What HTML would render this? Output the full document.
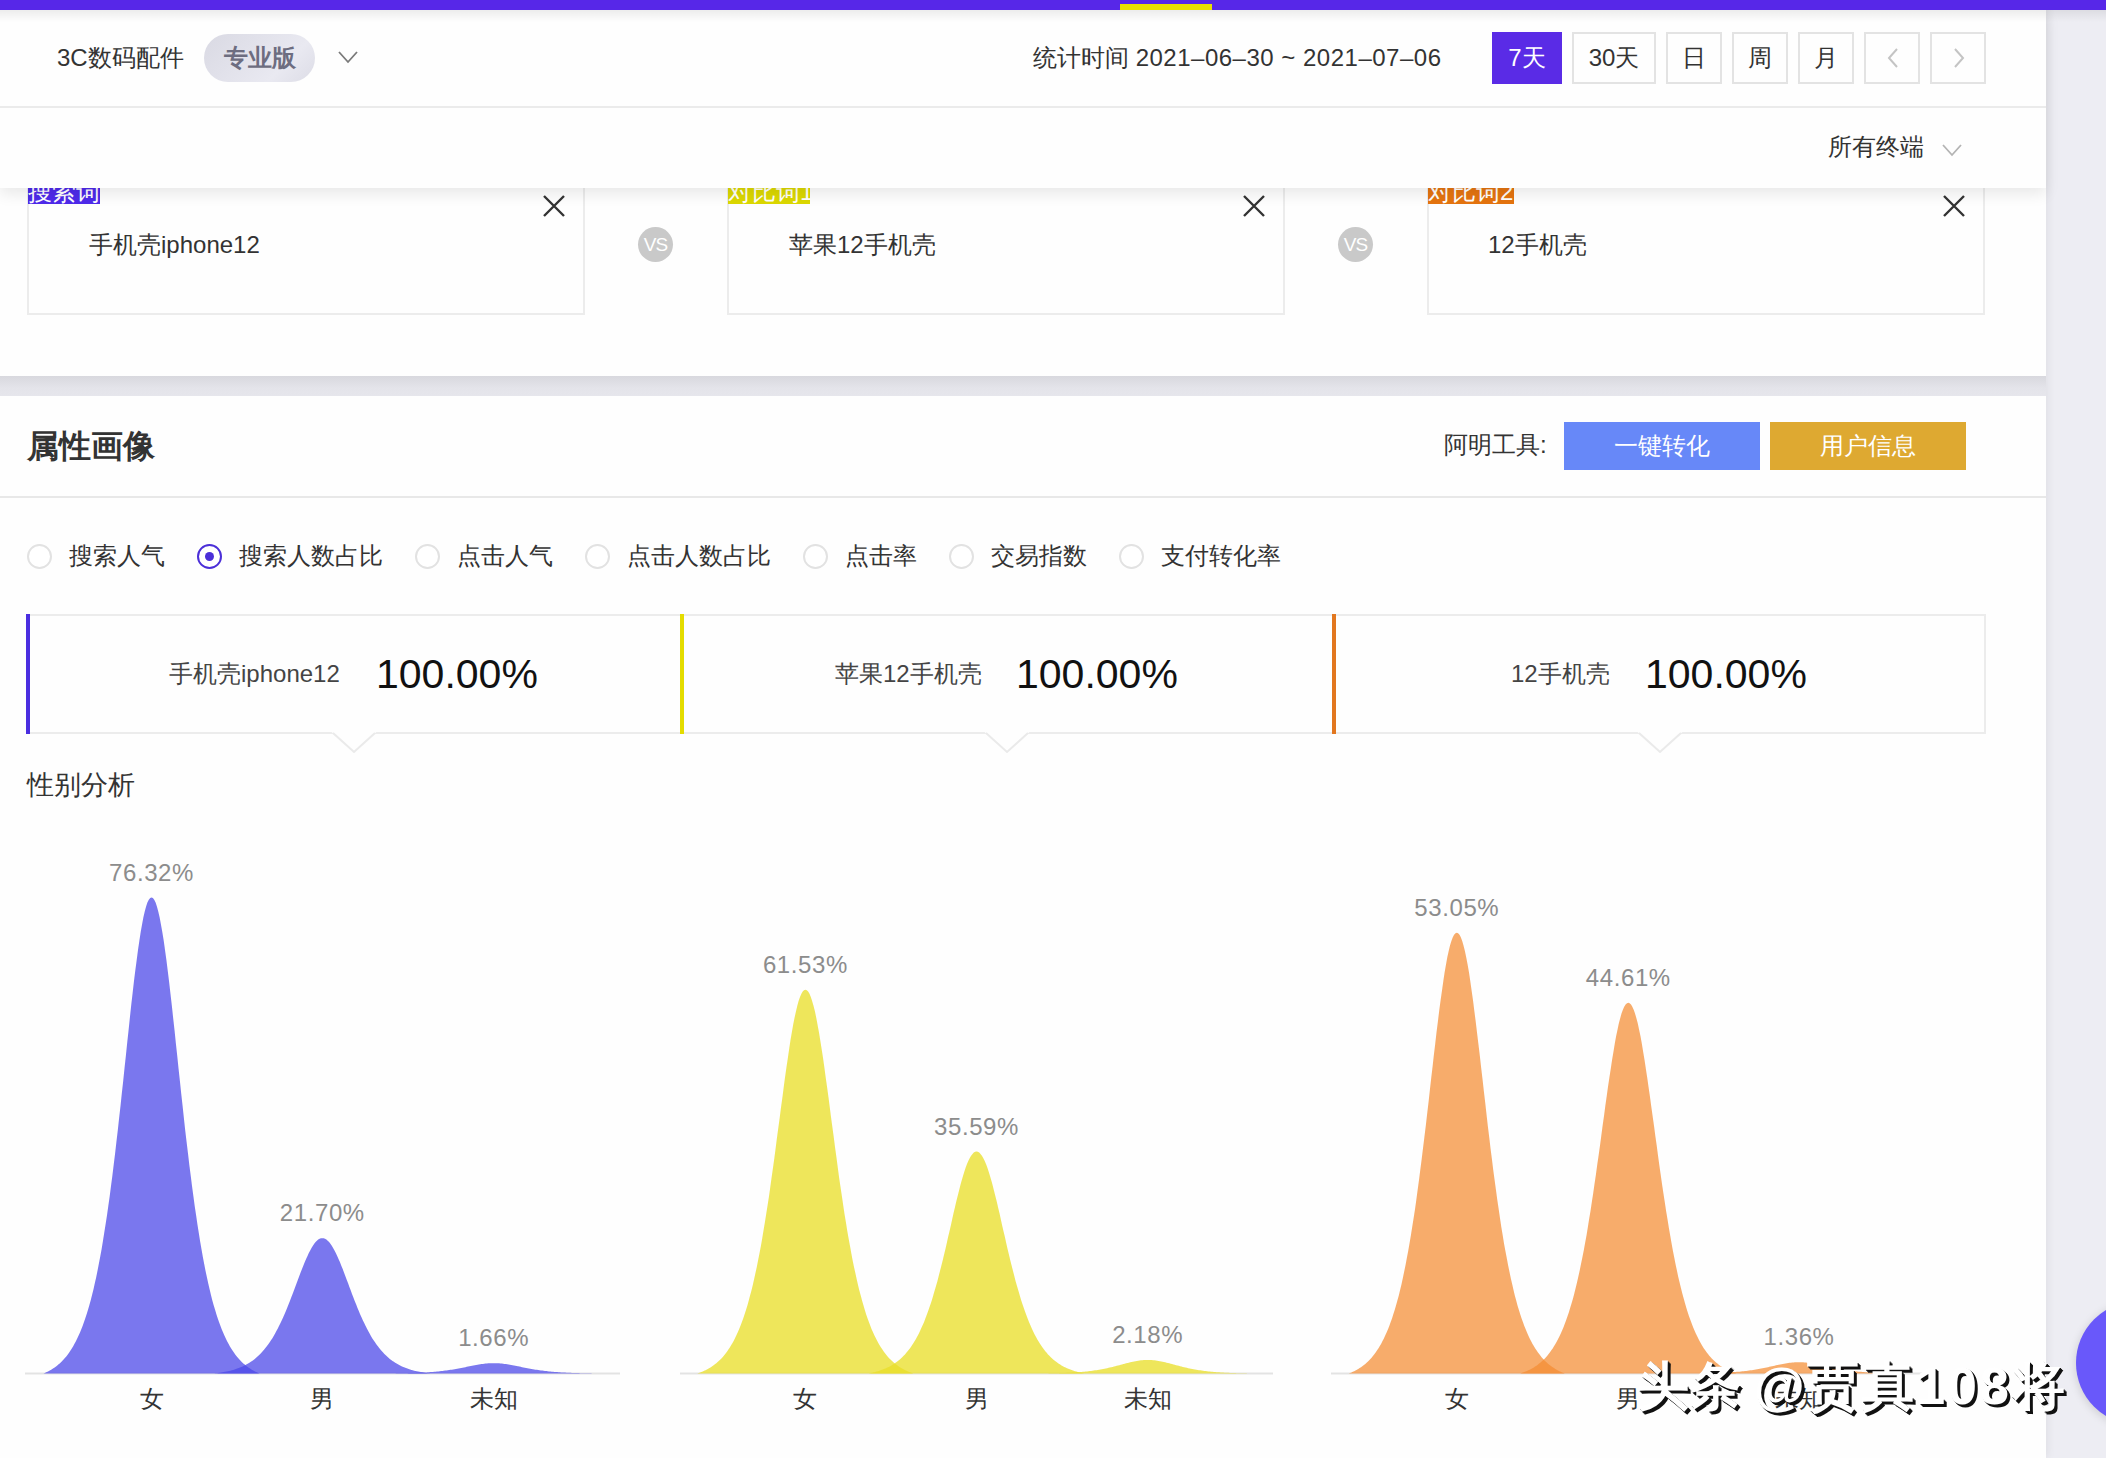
<!DOCTYPE html>
<html><head><meta charset="utf-8">
<style>
*{margin:0;padding:0;box-sizing:border-box}
html,body{width:2106px;height:1458px;overflow:hidden}
body{background:#ededf3;font-family:"Liberation Sans",sans-serif;color:#333;position:relative}
.abs{position:absolute}
#col{position:absolute;left:0;top:0;width:2046px;height:1458px;background:#fefefe;box-shadow:2px 0 8px rgba(0,0,0,0.06)}
#topbar{position:absolute;left:0;top:0;width:2106px;height:10px;background:#5727e8;z-index:20}
#topind{position:absolute;left:1120px;top:4px;width:92px;height:6px;background:#e8e000;z-index:21}
#hdr{position:absolute;left:0;top:10px;width:2046px;height:178px;background:#fefefe;z-index:10;box-shadow:0 6px 14px rgba(0,0,0,0.085)}
#hdr .line{position:absolute;left:0;top:96px;width:2046px;height:2px;background:#ebebeb}
.t24{position:absolute;font-size:24px;line-height:30px;white-space:nowrap}
.pill{position:absolute;left:204px;top:24px;width:111px;height:48px;border-radius:24px;background:linear-gradient(135deg,#d9d9e3,#e9e9f1 70%,#dcdce6);color:#6d6d80;font-size:24px;line-height:48px;text-align:center;font-weight:bold}
.btn{position:absolute;top:22px;height:52px;border:2px solid #e3e3e3;background:#fefefe;font-size:24px;line-height:48px;text-align:center;color:#333}
.btn.on{background:#5a2be6;border-color:#5a2be6;color:#fff}
.card{position:absolute;top:160px;width:558px;height:155px;border:2px solid #ececec;background:#fefefe}
.tag{position:absolute;top:176px;height:28px;font-size:24px;line-height:32px;color:#fff;padding:0;white-space:nowrap;overflow:hidden}
.vs{position:absolute;width:35px;height:35px;border-radius:50%;background:#c9c9c9;color:#fff;font-size:19px;line-height:35px;text-align:center;letter-spacing:-1px}
.xic{position:absolute;width:22px;height:22px}
#gap{position:absolute;left:0;top:376px;width:2046px;height:20px;background:linear-gradient(#d8d8de,#e4e4ea 60%,#e6e6ec)}
.radio{position:absolute;top:544px;width:25px;height:25px;border-radius:50%;border:2px solid #e2e2e2;background:#fff}
.radio.on{border-color:#4b2fd8}
.radio.on:after{content:"";position:absolute;left:6px;top:6px;width:9px;height:9px;border-radius:50%;background:#4b2fd8}
.rl{position:absolute;top:541px;font-size:24px;line-height:30px;color:#333;white-space:nowrap}
.pl{position:absolute;width:120px;text-align:center;font-size:24px;line-height:28px;color:#8c8c8c;letter-spacing:0.6px}
.xl{position:absolute;width:120px;text-align:center;font-size:24px;line-height:30px;color:#333}
.sv{position:absolute;font-size:41px;line-height:46px;color:#111;white-space:nowrap}
.sl{position:absolute;font-size:24px;line-height:30px;color:#444;white-space:nowrap}
</style></head><body>
<div id="col"></div>
<div id="topbar"></div><div class="abs" style="left:0;top:10px;width:2106px;height:12px;z-index:19;background:linear-gradient(rgba(0,0,0,0.07),rgba(0,0,0,0))"></div><div id="topind"></div>

<!-- search cards (under header overlay) -->
<div class="card" style="left:27px"></div>
<div class="card" style="left:727px"></div>
<div class="card" style="left:1427px"></div>
<div class="tag" style="left:28px;width:72px;background:#4e2aea">搜索词</div>
<div class="tag" style="left:728px;width:82px;background:#dcd800">对比词1</div>
<div class="tag" style="left:1428px;width:86px;background:#e5740f">对比词2</div>
<svg class="xic" style="left:543px;top:195px" viewBox="0 0 22 22"><path d="M1,1 L21,21 M21,1 L1,21" stroke="#333" stroke-width="2.4"/></svg>
<svg class="xic" style="left:1243px;top:195px" viewBox="0 0 22 22"><path d="M1,1 L21,21 M21,1 L1,21" stroke="#333" stroke-width="2.4"/></svg>
<svg class="xic" style="left:1943px;top:195px" viewBox="0 0 22 22"><path d="M1,1 L21,21 M21,1 L1,21" stroke="#333" stroke-width="2.4"/></svg>
<div class="t24" style="left:89px;top:230px">手机壳iphone12</div>
<div class="t24" style="left:789px;top:230px">苹果12手机壳</div>
<div class="t24" style="left:1488px;top:230px">12手机壳</div>
<div class="vs" style="left:638px;top:227px">VS</div>
<div class="vs" style="left:1338px;top:227px">VS</div>
<div id="gap"></div>

<!-- header overlay -->
<div id="hdr">
  <div class="t24" style="left:57px;top:33px">3C数码配件</div>
  <div class="pill">专业版</div>
  <svg class="abs" style="left:338px;top:41px" width="20" height="13" viewBox="0 0 20 13"><path d="M1,1 L10,11 L19,1" fill="none" stroke="#7a7a7a" stroke-width="1.8"/></svg>
  <div class="t24" style="left:1033px;top:33px">统计时间 <span style="letter-spacing:0.5px">2021–06–30 ~ 2021–07–06</span></div>
  <div class="btn on" style="left:1492px;width:70px">7天</div>
  <div class="btn" style="left:1572px;width:84px">30天</div>
  <div class="btn" style="left:1666px;width:56px">日</div>
  <div class="btn" style="left:1732px;width:56px">周</div>
  <div class="btn" style="left:1798px;width:56px">月</div>
  <div class="btn" style="left:1864px;width:56px"><svg style="position:absolute;left:21px;top:14px" width="12" height="20" viewBox="0 0 12 20"><path d="M10,1 L2,10 L10,19" fill="none" stroke="#c4c4c4" stroke-width="2"/></svg></div>
  <div class="btn" style="left:1930px;width:56px"><svg style="position:absolute;left:21px;top:14px" width="12" height="20" viewBox="0 0 12 20"><path d="M2,1 L10,10 L2,19" fill="none" stroke="#c4c4c4" stroke-width="2"/></svg></div>
  <div class="line"></div>
  <div class="t24" style="left:1828px;top:122px">所有终端</div>
  <svg class="abs" style="left:1942px;top:134px" width="20" height="13" viewBox="0 0 20 13"><path d="M1,1 L10,11 L19,1" fill="none" stroke="#b4b4b4" stroke-width="1.8"/></svg>
</div>

<!-- panel 2 -->
<div class="abs" style="left:27px;top:427px;font-size:32px;line-height:38px;font-weight:bold;color:#333;white-space:nowrap">属性画像</div>
<div class="t24" style="left:1444px;top:430px">阿明工具:</div>
<div class="abs" style="left:1564px;top:422px;width:196px;height:48px;background:#6788f8;color:#fff;font-size:24px;line-height:48px;text-align:center">一键转化</div>
<div class="abs" style="left:1770px;top:422px;width:196px;height:48px;background:#dea931;color:#fff;font-size:24px;line-height:48px;text-align:center">用户信息</div>
<div class="abs" style="left:0;top:496px;width:2046px;height:2px;background:#e8e8e8"></div>

<div class="radio" style="left:27px"></div><div class="rl" style="left:69px">搜索人气</div>
<div class="radio on" style="left:197px"></div><div class="rl" style="left:239px">搜索人数占比</div>
<div class="radio" style="left:415px"></div><div class="rl" style="left:457px">点击人气</div>
<div class="radio" style="left:585px"></div><div class="rl" style="left:627px">点击人数占比</div>
<div class="radio" style="left:803px"></div><div class="rl" style="left:845px">点击率</div>
<div class="radio" style="left:949px"></div><div class="rl" style="left:991px">交易指数</div>
<div class="radio" style="left:1119px"></div><div class="rl" style="left:1161px">支付转化率</div>

<!-- stat boxes -->
<div class="abs" style="left:26px;top:614px;width:1960px;height:120px;border:2px solid #ececec;background:#fefefe"></div>
<div class="abs" style="left:26px;top:614px;width:4px;height:120px;background:#4a2ee0"></div>
<div class="abs" style="left:680px;top:614px;width:4px;height:120px;background:#e4dc00"></div>
<div class="abs" style="left:1332px;top:614px;width:4px;height:120px;background:#e2771f"></div>
<div class="sl" style="left:169px;top:659px">手机壳iphone12</div>
<div class="sv" style="left:376px;top:651px">100.00%</div>
<div class="sl" style="left:835px;top:659px">苹果12手机壳</div>
<div class="sv" style="left:1016px;top:651px">100.00%</div>
<div class="sl" style="left:1511px;top:659px">12手机壳</div>
<div class="sv" style="left:1645px;top:651px">100.00%</div>
<svg class="abs" style="left:0;top:720px" width="2046" height="40"><path d="M331,11.5 L354,33 L377,11.5 Z" fill="#fefefe"/><path d="M333,13 L354,32 L375,13" fill="none" stroke="#eaeaea" stroke-width="2"/><path d="M984,11.5 L1007,33 L1030,11.5 Z" fill="#fefefe"/><path d="M986,13 L1007,32 L1028,13" fill="none" stroke="#eaeaea" stroke-width="2"/><path d="M1637,11.5 L1660,33 L1683,11.5 Z" fill="#fefefe"/><path d="M1639,13 L1660,32 L1681,13" fill="none" stroke="#eaeaea" stroke-width="2"/></svg>

<div class="abs" style="left:27px;top:768px;font-size:27px;line-height:34px;color:#333;white-space:nowrap">性别分析</div>

<svg class="abs" style="left:0;top:0" width="2106" height="1458">
<line x1="25" y1="1373.5" x2="620" y2="1373.5" stroke="#e3e3e3" stroke-width="2"/>
<path d="M43.5,1373.5 L43.5,1373.50 L44.8,1372.93 L46.2,1372.32 L47.5,1371.68 L48.9,1370.98 L50.2,1370.24 L51.6,1369.45 L53.0,1368.60 L54.3,1367.69 L55.7,1366.72 L57.0,1365.69 L58.3,1364.58 L59.7,1363.40 L61.0,1362.14 L62.4,1360.79 L63.8,1359.35 L65.1,1357.82 L66.5,1356.18 L67.8,1354.43 L69.2,1352.57 L70.5,1350.58 L71.8,1348.47 L73.2,1346.21 L74.5,1343.81 L75.9,1341.25 L77.2,1338.52 L78.6,1335.62 L80.0,1332.54 L81.3,1329.26 L82.7,1325.78 L84.0,1322.08 L85.3,1318.15 L86.7,1313.99 L88.1,1309.57 L89.4,1304.90 L90.8,1299.95 L92.1,1294.72 L93.5,1289.19 L94.8,1283.35 L96.2,1277.19 L97.5,1270.71 L98.8,1263.88 L100.2,1256.70 L101.6,1249.17 L102.9,1241.27 L104.2,1233.00 L105.6,1224.36 L107.0,1215.34 L108.3,1205.94 L109.7,1196.17 L111.0,1186.03 L112.4,1175.53 L113.7,1164.68 L115.1,1153.51 L116.4,1142.02 L117.8,1130.24 L119.1,1118.20 L120.5,1105.94 L121.8,1093.48 L123.2,1080.89 L124.5,1068.20 L125.9,1055.47 L127.2,1042.75 L128.6,1030.11 L129.9,1017.62 L131.2,1005.35 L132.6,993.37 L133.9,981.76 L135.3,970.59 L136.7,959.95 L138.0,949.91 L139.4,940.55 L140.7,931.95 L142.1,924.18 L143.4,917.29 L144.8,911.36 L146.1,906.43 L147.4,902.55 L148.8,899.75 L150.2,898.06 L151.5,897.49 L152.9,898.06 L154.2,899.75 L155.6,902.55 L156.9,906.43 L158.2,911.36 L159.6,917.29 L160.9,924.18 L162.3,931.95 L163.7,940.55 L165.0,949.91 L166.4,959.95 L167.7,970.59 L169.1,981.76 L170.4,993.37 L171.8,1005.35 L173.1,1017.62 L174.5,1030.11 L175.8,1042.75 L177.2,1055.47 L178.5,1068.20 L179.9,1080.89 L181.2,1093.48 L182.6,1105.94 L183.9,1118.20 L185.2,1130.24 L186.6,1142.02 L188.0,1153.51 L189.3,1164.68 L190.7,1175.53 L192.0,1186.03 L193.4,1196.17 L194.7,1205.94 L196.1,1215.34 L197.4,1224.36 L198.8,1233.00 L200.1,1241.27 L201.5,1249.17 L202.8,1256.70 L204.2,1263.88 L205.5,1270.71 L206.9,1277.19 L208.2,1283.35 L209.6,1289.19 L210.9,1294.72 L212.2,1299.95 L213.6,1304.90 L215.0,1309.57 L216.3,1313.99 L217.7,1318.15 L219.0,1322.08 L220.4,1325.78 L221.7,1329.26 L223.1,1332.54 L224.4,1335.62 L225.8,1338.52 L227.1,1341.25 L228.5,1343.81 L229.8,1346.21 L231.2,1348.47 L232.5,1350.58 L233.9,1352.57 L235.2,1354.43 L236.6,1356.18 L237.9,1357.82 L239.2,1359.35 L240.6,1360.79 L242.0,1362.14 L243.3,1363.40 L244.7,1364.58 L246.0,1365.69 L247.4,1366.72 L248.7,1367.69 L250.1,1368.60 L251.4,1369.45 L252.8,1370.24 L254.1,1370.98 L255.5,1371.68 L256.8,1372.32 L258.1,1372.93 L259.5,1373.50 L259.5,1373.5 Z" fill="rgba(76,72,232,0.74)"/>
<path d="M214.3,1373.5 L214.3,1373.50 L215.7,1373.34 L217.0,1373.17 L218.4,1372.98 L219.7,1372.78 L221.1,1372.57 L222.4,1372.35 L223.8,1372.11 L225.1,1371.85 L226.5,1371.57 L227.8,1371.28 L229.2,1370.96 L230.5,1370.63 L231.9,1370.27 L233.2,1369.89 L234.6,1369.48 L235.9,1369.04 L237.2,1368.58 L238.6,1368.08 L240.0,1367.55 L241.3,1366.98 L242.7,1366.38 L244.0,1365.74 L245.4,1365.06 L246.7,1364.33 L248.1,1363.55 L249.4,1362.73 L250.8,1361.85 L252.1,1360.92 L253.5,1359.93 L254.8,1358.88 L256.1,1357.76 L257.5,1356.58 L258.9,1355.32 L260.2,1353.99 L261.6,1352.59 L262.9,1351.10 L264.2,1349.53 L265.6,1347.87 L267.0,1346.12 L268.3,1344.27 L269.7,1342.33 L271.0,1340.29 L272.4,1338.15 L273.7,1335.90 L275.1,1333.55 L276.4,1331.09 L277.8,1328.53 L279.1,1325.86 L280.5,1323.08 L281.8,1320.20 L283.2,1317.21 L284.5,1314.13 L285.9,1310.95 L287.2,1307.68 L288.6,1304.33 L289.9,1300.91 L291.2,1297.42 L292.6,1293.88 L294.0,1290.30 L295.3,1286.69 L296.7,1283.07 L298.0,1279.46 L299.4,1275.87 L300.7,1272.31 L302.1,1268.82 L303.4,1265.42 L304.8,1262.12 L306.1,1258.94 L307.5,1255.92 L308.8,1253.06 L310.2,1250.40 L311.5,1247.96 L312.9,1245.74 L314.2,1243.79 L315.6,1242.10 L316.9,1240.70 L318.2,1239.59 L319.6,1238.80 L321.0,1238.32 L322.3,1238.16 L323.7,1238.32 L325.0,1238.80 L326.4,1239.59 L327.7,1240.70 L329.1,1242.10 L330.4,1243.79 L331.8,1245.74 L333.1,1247.96 L334.5,1250.40 L335.8,1253.06 L337.2,1255.92 L338.5,1258.94 L339.9,1262.12 L341.2,1265.42 L342.6,1268.82 L343.9,1272.31 L345.2,1275.87 L346.6,1279.46 L348.0,1283.07 L349.3,1286.69 L350.7,1290.30 L352.0,1293.88 L353.4,1297.42 L354.7,1300.91 L356.1,1304.33 L357.4,1307.68 L358.8,1310.95 L360.1,1314.13 L361.5,1317.21 L362.8,1320.20 L364.2,1323.08 L365.5,1325.86 L366.9,1328.53 L368.2,1331.09 L369.6,1333.55 L370.9,1335.90 L372.2,1338.15 L373.6,1340.29 L375.0,1342.33 L376.3,1344.27 L377.7,1346.12 L379.0,1347.87 L380.4,1349.53 L381.7,1351.10 L383.1,1352.59 L384.4,1353.99 L385.8,1355.32 L387.1,1356.58 L388.5,1357.76 L389.8,1358.88 L391.2,1359.93 L392.5,1360.92 L393.9,1361.85 L395.2,1362.73 L396.6,1363.55 L397.9,1364.33 L399.2,1365.06 L400.6,1365.74 L402.0,1366.38 L403.3,1366.98 L404.7,1367.55 L406.0,1368.08 L407.4,1368.58 L408.7,1369.04 L410.1,1369.48 L411.4,1369.89 L412.8,1370.27 L414.1,1370.63 L415.5,1370.96 L416.8,1371.28 L418.2,1371.57 L419.5,1371.85 L420.9,1372.11 L422.2,1372.35 L423.6,1372.57 L424.9,1372.78 L426.2,1372.98 L427.6,1373.17 L429.0,1373.34 L430.3,1373.50 L430.3,1373.5 Z" fill="rgba(76,72,232,0.74)"/>
<path d="M385.7,1373.5 L385.7,1373.50 L387.0,1373.49 L388.4,1373.47 L389.8,1373.46 L391.1,1373.45 L392.4,1373.43 L393.8,1373.41 L395.1,1373.39 L396.5,1373.37 L397.9,1373.35 L399.2,1373.33 L400.5,1373.31 L401.9,1373.28 L403.2,1373.25 L404.6,1373.22 L405.9,1373.19 L407.3,1373.16 L408.6,1373.12 L410.0,1373.09 L411.4,1373.04 L412.7,1373.00 L414.0,1372.96 L415.4,1372.91 L416.8,1372.85 L418.1,1372.80 L419.4,1372.74 L420.8,1372.68 L422.1,1372.61 L423.5,1372.54 L424.9,1372.46 L426.2,1372.38 L427.5,1372.30 L428.9,1372.21 L430.2,1372.11 L431.6,1372.01 L432.9,1371.90 L434.3,1371.79 L435.6,1371.67 L437.0,1371.54 L438.4,1371.41 L439.7,1371.26 L441.1,1371.12 L442.4,1370.96 L443.8,1370.80 L445.1,1370.62 L446.4,1370.44 L447.8,1370.26 L449.1,1370.06 L450.5,1369.86 L451.9,1369.64 L453.2,1369.42 L454.6,1369.19 L455.9,1368.96 L457.2,1368.72 L458.6,1368.47 L459.9,1368.21 L461.3,1367.95 L462.6,1367.68 L464.0,1367.41 L465.4,1367.14 L466.7,1366.86 L468.1,1366.58 L469.4,1366.31 L470.8,1366.03 L472.1,1365.76 L473.4,1365.49 L474.8,1365.23 L476.1,1364.98 L477.5,1364.74 L478.9,1364.51 L480.2,1364.29 L481.6,1364.08 L482.9,1363.90 L484.2,1363.73 L485.6,1363.58 L486.9,1363.45 L488.3,1363.34 L489.6,1363.26 L491.0,1363.20 L492.4,1363.16 L493.7,1363.15 L495.1,1363.16 L496.4,1363.20 L497.8,1363.26 L499.1,1363.34 L500.4,1363.45 L501.8,1363.58 L503.1,1363.73 L504.5,1363.90 L505.9,1364.08 L507.2,1364.29 L508.6,1364.51 L509.9,1364.74 L511.2,1364.98 L512.6,1365.23 L514.0,1365.49 L515.3,1365.76 L516.6,1366.03 L518.0,1366.31 L519.4,1366.58 L520.7,1366.86 L522.0,1367.14 L523.4,1367.41 L524.8,1367.68 L526.1,1367.95 L527.5,1368.21 L528.8,1368.47 L530.1,1368.72 L531.5,1368.96 L532.9,1369.19 L534.2,1369.42 L535.5,1369.64 L536.9,1369.86 L538.2,1370.06 L539.6,1370.26 L541.0,1370.44 L542.3,1370.62 L543.6,1370.80 L545.0,1370.96 L546.4,1371.12 L547.7,1371.26 L549.0,1371.41 L550.4,1371.54 L551.8,1371.67 L553.1,1371.79 L554.5,1371.90 L555.8,1372.01 L557.1,1372.11 L558.5,1372.21 L559.9,1372.30 L561.2,1372.38 L562.5,1372.46 L563.9,1372.54 L565.2,1372.61 L566.6,1372.68 L568.0,1372.74 L569.3,1372.80 L570.6,1372.85 L572.0,1372.91 L573.4,1372.96 L574.7,1373.00 L576.0,1373.04 L577.4,1373.09 L578.8,1373.12 L580.1,1373.16 L581.5,1373.19 L582.8,1373.22 L584.1,1373.25 L585.5,1373.28 L586.9,1373.31 L588.2,1373.33 L589.5,1373.35 L590.9,1373.37 L592.2,1373.39 L593.6,1373.41 L595.0,1373.43 L596.3,1373.45 L597.6,1373.46 L599.0,1373.47 L600.4,1373.49 L601.7,1373.50 L601.7,1373.5 Z" fill="rgba(76,72,232,0.74)"/>
<line x1="680" y1="1373.5" x2="1273" y2="1373.5" stroke="#e3e3e3" stroke-width="2"/>
<path d="M697.4,1373.5 L697.4,1373.50 L698.8,1373.04 L700.1,1372.55 L701.4,1372.03 L702.8,1371.47 L704.1,1370.87 L705.5,1370.23 L706.9,1369.55 L708.2,1368.82 L709.5,1368.04 L710.9,1367.20 L712.2,1366.31 L713.6,1365.36 L714.9,1364.34 L716.3,1363.25 L717.6,1362.09 L719.0,1360.86 L720.4,1359.54 L721.7,1358.13 L723.0,1356.63 L724.4,1355.02 L725.8,1353.32 L727.1,1351.50 L728.4,1349.56 L729.8,1347.50 L731.1,1345.30 L732.5,1342.96 L733.9,1340.48 L735.2,1337.83 L736.5,1335.02 L737.9,1332.04 L739.2,1328.88 L740.6,1325.52 L741.9,1321.96 L743.3,1318.19 L744.6,1314.20 L746.0,1309.98 L747.4,1305.53 L748.7,1300.82 L750.0,1295.86 L751.4,1290.63 L752.8,1285.12 L754.1,1279.34 L755.4,1273.26 L756.8,1266.89 L758.1,1260.23 L759.5,1253.26 L760.9,1245.99 L762.2,1238.41 L763.5,1230.53 L764.9,1222.36 L766.2,1213.90 L767.6,1205.15 L769.0,1196.14 L770.3,1186.88 L771.6,1177.38 L773.0,1167.67 L774.4,1157.79 L775.7,1147.75 L777.0,1137.59 L778.4,1127.36 L779.8,1117.10 L781.1,1106.85 L782.5,1096.66 L783.8,1086.59 L785.1,1076.69 L786.5,1067.03 L787.9,1057.67 L789.2,1048.67 L790.5,1040.09 L791.9,1032.00 L793.2,1024.45 L794.6,1017.52 L796.0,1011.25 L797.3,1005.70 L798.6,1000.92 L800.0,996.94 L801.4,993.81 L802.7,991.56 L804.0,990.19 L805.4,989.74 L806.8,990.19 L808.1,991.56 L809.5,993.81 L810.8,996.94 L812.1,1000.92 L813.5,1005.70 L814.9,1011.25 L816.2,1017.52 L817.5,1024.45 L818.9,1032.00 L820.2,1040.09 L821.6,1048.67 L823.0,1057.67 L824.3,1067.03 L825.6,1076.69 L827.0,1086.59 L828.4,1096.66 L829.7,1106.85 L831.0,1117.10 L832.4,1127.36 L833.8,1137.59 L835.1,1147.75 L836.5,1157.79 L837.8,1167.67 L839.1,1177.38 L840.5,1186.88 L841.9,1196.14 L843.2,1205.15 L844.5,1213.90 L845.9,1222.36 L847.2,1230.53 L848.6,1238.41 L850.0,1245.99 L851.3,1253.26 L852.6,1260.23 L854.0,1266.89 L855.4,1273.26 L856.7,1279.34 L858.0,1285.12 L859.4,1290.63 L860.8,1295.86 L862.1,1300.82 L863.5,1305.53 L864.8,1309.98 L866.1,1314.20 L867.5,1318.19 L868.9,1321.96 L870.2,1325.52 L871.5,1328.88 L872.9,1332.04 L874.2,1335.02 L875.6,1337.83 L877.0,1340.48 L878.3,1342.96 L879.6,1345.30 L881.0,1347.50 L882.4,1349.56 L883.7,1351.50 L885.0,1353.32 L886.4,1355.02 L887.8,1356.63 L889.1,1358.13 L890.5,1359.54 L891.8,1360.86 L893.1,1362.09 L894.5,1363.25 L895.9,1364.34 L897.2,1365.36 L898.5,1366.31 L899.9,1367.20 L901.2,1368.04 L902.6,1368.82 L904.0,1369.55 L905.3,1370.23 L906.6,1370.87 L908.0,1371.47 L909.4,1372.03 L910.7,1372.55 L912.0,1373.04 L913.4,1373.50 L913.4,1373.5 Z" fill="rgba(232,222,40,0.76)"/>
<path d="M868.5,1373.5 L868.5,1373.50 L869.9,1373.24 L871.2,1372.95 L872.5,1372.65 L873.9,1372.33 L875.2,1371.98 L876.6,1371.61 L878.0,1371.21 L879.3,1370.79 L880.6,1370.34 L882.0,1369.86 L883.4,1369.34 L884.7,1368.79 L886.0,1368.20 L887.4,1367.57 L888.8,1366.90 L890.1,1366.19 L891.5,1365.42 L892.8,1364.61 L894.1,1363.74 L895.5,1362.81 L896.9,1361.83 L898.2,1360.77 L899.5,1359.65 L900.9,1358.46 L902.2,1357.19 L903.6,1355.84 L905.0,1354.40 L906.3,1352.87 L907.6,1351.24 L909.0,1349.52 L910.4,1347.69 L911.7,1345.75 L913.0,1343.69 L914.4,1341.51 L915.8,1339.20 L917.1,1336.76 L918.5,1334.18 L919.8,1331.46 L921.1,1328.59 L922.5,1325.56 L923.9,1322.38 L925.2,1319.03 L926.5,1315.52 L927.9,1311.84 L929.2,1307.98 L930.6,1303.95 L932.0,1299.74 L933.3,1295.36 L934.6,1290.81 L936.0,1286.08 L937.4,1281.18 L938.7,1276.12 L940.0,1270.91 L941.4,1265.55 L942.8,1260.06 L944.1,1254.45 L945.5,1248.73 L946.8,1242.92 L948.1,1237.05 L949.5,1231.13 L950.9,1225.19 L952.2,1219.26 L953.5,1213.37 L954.9,1207.55 L956.2,1201.82 L957.6,1196.23 L959.0,1190.82 L960.3,1185.61 L961.6,1180.65 L963.0,1175.97 L964.4,1171.61 L965.7,1167.59 L967.0,1163.97 L968.4,1160.76 L969.8,1157.99 L971.1,1155.69 L972.5,1153.88 L973.8,1152.58 L975.1,1151.79 L976.5,1151.53 L977.9,1151.79 L979.2,1152.58 L980.5,1153.88 L981.9,1155.69 L983.2,1157.99 L984.6,1160.76 L986.0,1163.97 L987.3,1167.59 L988.6,1171.61 L990.0,1175.97 L991.4,1180.65 L992.7,1185.61 L994.0,1190.82 L995.4,1196.23 L996.8,1201.82 L998.1,1207.55 L999.5,1213.37 L1000.8,1219.26 L1002.1,1225.19 L1003.5,1231.13 L1004.9,1237.05 L1006.2,1242.92 L1007.5,1248.73 L1008.9,1254.45 L1010.2,1260.06 L1011.6,1265.55 L1013.0,1270.91 L1014.3,1276.12 L1015.6,1281.18 L1017.0,1286.08 L1018.4,1290.81 L1019.7,1295.36 L1021.0,1299.74 L1022.4,1303.95 L1023.8,1307.98 L1025.1,1311.84 L1026.5,1315.52 L1027.8,1319.03 L1029.2,1322.38 L1030.5,1325.56 L1031.8,1328.59 L1033.2,1331.46 L1034.5,1334.18 L1035.9,1336.76 L1037.2,1339.20 L1038.6,1341.51 L1040.0,1343.69 L1041.3,1345.75 L1042.7,1347.69 L1044.0,1349.52 L1045.3,1351.24 L1046.7,1352.87 L1048.0,1354.40 L1049.4,1355.84 L1050.8,1357.19 L1052.1,1358.46 L1053.5,1359.65 L1054.8,1360.77 L1056.2,1361.83 L1057.5,1362.81 L1058.8,1363.74 L1060.2,1364.61 L1061.5,1365.42 L1062.9,1366.19 L1064.2,1366.90 L1065.6,1367.57 L1067.0,1368.20 L1068.3,1368.79 L1069.7,1369.34 L1071.0,1369.86 L1072.3,1370.34 L1073.7,1370.79 L1075.0,1371.21 L1076.4,1371.61 L1077.8,1371.98 L1079.1,1372.33 L1080.5,1372.65 L1081.8,1372.95 L1083.2,1373.24 L1084.5,1373.50 L1084.5,1373.5 Z" fill="rgba(232,222,40,0.76)"/>
<path d="M1039.7,1373.5 L1039.7,1373.50 L1041.0,1373.48 L1042.4,1373.47 L1043.8,1373.45 L1045.1,1373.43 L1046.5,1373.41 L1047.8,1373.38 L1049.2,1373.36 L1050.5,1373.33 L1051.9,1373.31 L1053.2,1373.28 L1054.5,1373.25 L1055.9,1373.21 L1057.2,1373.18 L1058.6,1373.14 L1060.0,1373.10 L1061.3,1373.05 L1062.7,1373.01 L1064.0,1372.96 L1065.4,1372.90 L1066.7,1372.85 L1068.0,1372.78 L1069.4,1372.72 L1070.8,1372.65 L1072.1,1372.58 L1073.5,1372.50 L1074.8,1372.42 L1076.2,1372.33 L1077.5,1372.24 L1078.9,1372.14 L1080.2,1372.03 L1081.5,1371.92 L1082.9,1371.80 L1084.2,1371.67 L1085.6,1371.54 L1087.0,1371.40 L1088.3,1371.25 L1089.7,1371.09 L1091.0,1370.92 L1092.4,1370.75 L1093.7,1370.56 L1095.0,1370.37 L1096.4,1370.16 L1097.8,1369.95 L1099.1,1369.72 L1100.5,1369.49 L1101.8,1369.24 L1103.2,1368.98 L1104.5,1368.71 L1105.9,1368.43 L1107.2,1368.15 L1108.5,1367.85 L1109.9,1367.54 L1111.2,1367.22 L1112.6,1366.89 L1114.0,1366.55 L1115.3,1366.21 L1116.7,1365.86 L1118.0,1365.50 L1119.4,1365.14 L1120.7,1364.78 L1122.0,1364.42 L1123.4,1364.05 L1124.8,1363.69 L1126.1,1363.33 L1127.5,1362.98 L1128.8,1362.64 L1130.2,1362.31 L1131.5,1361.99 L1132.9,1361.69 L1134.2,1361.40 L1135.5,1361.13 L1136.9,1360.89 L1138.2,1360.67 L1139.6,1360.47 L1141.0,1360.30 L1142.3,1360.16 L1143.7,1360.05 L1145.0,1359.97 L1146.4,1359.92 L1147.7,1359.90 L1149.0,1359.92 L1150.4,1359.97 L1151.8,1360.05 L1153.1,1360.16 L1154.5,1360.30 L1155.8,1360.47 L1157.2,1360.67 L1158.5,1360.89 L1159.9,1361.13 L1161.2,1361.40 L1162.5,1361.69 L1163.9,1361.99 L1165.2,1362.31 L1166.6,1362.64 L1168.0,1362.98 L1169.3,1363.33 L1170.7,1363.69 L1172.0,1364.05 L1173.4,1364.42 L1174.7,1364.78 L1176.1,1365.14 L1177.4,1365.50 L1178.8,1365.86 L1180.1,1366.21 L1181.5,1366.55 L1182.8,1366.89 L1184.2,1367.22 L1185.5,1367.54 L1186.9,1367.85 L1188.2,1368.15 L1189.6,1368.43 L1190.9,1368.71 L1192.2,1368.98 L1193.6,1369.24 L1195.0,1369.49 L1196.3,1369.72 L1197.7,1369.95 L1199.0,1370.16 L1200.4,1370.37 L1201.7,1370.56 L1203.1,1370.75 L1204.4,1370.92 L1205.8,1371.09 L1207.1,1371.25 L1208.5,1371.40 L1209.8,1371.54 L1211.2,1371.67 L1212.5,1371.80 L1213.9,1371.92 L1215.2,1372.03 L1216.6,1372.14 L1217.9,1372.24 L1219.2,1372.33 L1220.6,1372.42 L1222.0,1372.50 L1223.3,1372.58 L1224.7,1372.65 L1226.0,1372.72 L1227.4,1372.78 L1228.7,1372.85 L1230.1,1372.90 L1231.4,1372.96 L1232.8,1373.01 L1234.1,1373.05 L1235.5,1373.10 L1236.8,1373.14 L1238.2,1373.18 L1239.5,1373.21 L1240.9,1373.25 L1242.2,1373.28 L1243.6,1373.31 L1244.9,1373.33 L1246.2,1373.36 L1247.6,1373.38 L1249.0,1373.41 L1250.3,1373.43 L1251.7,1373.45 L1253.0,1373.47 L1254.4,1373.48 L1255.7,1373.50 L1255.7,1373.5 Z" fill="rgba(232,222,40,0.76)"/>
<line x1="1331" y1="1373.5" x2="1925" y2="1373.5" stroke="#e3e3e3" stroke-width="2"/>
<path d="M1348.8,1373.5 L1348.8,1373.50 L1350.1,1372.97 L1351.5,1372.41 L1352.8,1371.81 L1354.2,1371.17 L1355.5,1370.48 L1356.9,1369.74 L1358.2,1368.96 L1359.6,1368.12 L1361.0,1367.22 L1362.3,1366.26 L1363.6,1365.24 L1365.0,1364.15 L1366.3,1362.98 L1367.7,1361.73 L1369.0,1360.40 L1370.4,1358.98 L1371.8,1357.46 L1373.1,1355.84 L1374.5,1354.12 L1375.8,1352.28 L1377.1,1350.32 L1378.5,1348.23 L1379.8,1346.00 L1381.2,1343.63 L1382.5,1341.10 L1383.9,1338.42 L1385.2,1335.56 L1386.6,1332.53 L1388.0,1329.30 L1389.3,1325.88 L1390.6,1322.24 L1392.0,1318.38 L1393.3,1314.30 L1394.7,1309.97 L1396.0,1305.38 L1397.4,1300.54 L1398.8,1295.42 L1400.1,1290.01 L1401.5,1284.31 L1402.8,1278.30 L1404.1,1271.98 L1405.5,1265.33 L1406.8,1258.35 L1408.2,1251.04 L1409.5,1243.38 L1410.9,1235.37 L1412.2,1227.02 L1413.6,1218.32 L1415.0,1209.27 L1416.3,1199.88 L1417.6,1190.15 L1419.0,1180.11 L1420.3,1169.76 L1421.7,1159.12 L1423.0,1148.21 L1424.4,1137.06 L1425.8,1125.70 L1427.1,1114.17 L1428.5,1102.50 L1429.8,1090.75 L1431.1,1078.96 L1432.5,1067.18 L1433.8,1055.48 L1435.2,1043.91 L1436.5,1032.54 L1437.9,1021.45 L1439.2,1010.69 L1440.6,1000.35 L1442.0,990.50 L1443.3,981.20 L1444.6,972.54 L1446.0,964.57 L1447.3,957.37 L1448.7,950.99 L1450.0,945.50 L1451.4,940.93 L1452.8,937.34 L1454.1,934.74 L1455.5,933.18 L1456.8,932.65 L1458.1,933.18 L1459.5,934.74 L1460.8,937.34 L1462.2,940.93 L1463.5,945.50 L1464.9,950.99 L1466.2,957.37 L1467.6,964.57 L1469.0,972.54 L1470.3,981.20 L1471.6,990.50 L1473.0,1000.35 L1474.3,1010.69 L1475.7,1021.45 L1477.0,1032.54 L1478.4,1043.91 L1479.8,1055.48 L1481.1,1067.18 L1482.5,1078.96 L1483.8,1090.75 L1485.2,1102.50 L1486.5,1114.17 L1487.8,1125.70 L1489.2,1137.06 L1490.5,1148.21 L1491.9,1159.12 L1493.2,1169.76 L1494.6,1180.11 L1496.0,1190.15 L1497.3,1199.88 L1498.7,1209.27 L1500.0,1218.32 L1501.3,1227.02 L1502.7,1235.37 L1504.0,1243.38 L1505.4,1251.04 L1506.8,1258.35 L1508.1,1265.33 L1509.5,1271.98 L1510.8,1278.30 L1512.2,1284.31 L1513.5,1290.01 L1514.8,1295.42 L1516.2,1300.54 L1517.5,1305.38 L1518.9,1309.97 L1520.2,1314.30 L1521.6,1318.38 L1523.0,1322.24 L1524.3,1325.88 L1525.7,1329.30 L1527.0,1332.53 L1528.3,1335.56 L1529.7,1338.42 L1531.0,1341.10 L1532.4,1343.63 L1533.8,1346.00 L1535.1,1348.23 L1536.5,1350.32 L1537.8,1352.28 L1539.2,1354.12 L1540.5,1355.84 L1541.8,1357.46 L1543.2,1358.98 L1544.5,1360.40 L1545.9,1361.73 L1547.2,1362.98 L1548.6,1364.15 L1550.0,1365.24 L1551.3,1366.26 L1552.7,1367.22 L1554.0,1368.12 L1555.3,1368.96 L1556.7,1369.74 L1558.0,1370.48 L1559.4,1371.17 L1560.8,1371.81 L1562.1,1372.41 L1563.5,1372.97 L1564.8,1373.50 L1564.8,1373.5 Z" fill="rgba(244,140,50,0.72)"/>
<path d="M1520.3,1373.5 L1520.3,1373.50 L1521.6,1373.06 L1523.0,1372.58 L1524.3,1372.08 L1525.7,1371.54 L1527.0,1370.96 L1528.4,1370.34 L1529.8,1369.68 L1531.1,1368.98 L1532.5,1368.22 L1533.8,1367.41 L1535.1,1366.55 L1536.5,1365.63 L1537.8,1364.65 L1539.2,1363.60 L1540.5,1362.48 L1541.9,1361.29 L1543.2,1360.01 L1544.6,1358.65 L1546.0,1357.20 L1547.3,1355.65 L1548.6,1354.00 L1550.0,1352.25 L1551.3,1350.37 L1552.7,1348.38 L1554.0,1346.26 L1555.4,1344.00 L1556.8,1341.60 L1558.1,1339.05 L1559.5,1336.33 L1560.8,1333.45 L1562.1,1330.40 L1563.5,1327.15 L1564.8,1323.72 L1566.2,1320.07 L1567.5,1316.22 L1568.9,1312.15 L1570.2,1307.84 L1571.6,1303.29 L1573.0,1298.50 L1574.3,1293.45 L1575.6,1288.13 L1577.0,1282.54 L1578.3,1276.67 L1579.7,1270.52 L1581.0,1264.08 L1582.4,1257.35 L1583.8,1250.32 L1585.1,1243.01 L1586.5,1235.40 L1587.8,1227.50 L1589.1,1219.32 L1590.5,1210.88 L1591.8,1202.17 L1593.2,1193.22 L1594.5,1184.05 L1595.9,1174.67 L1597.2,1165.12 L1598.6,1155.43 L1600.0,1145.62 L1601.3,1135.73 L1602.6,1125.82 L1604.0,1115.92 L1605.3,1106.07 L1606.7,1096.35 L1608.0,1086.79 L1609.4,1077.46 L1610.8,1068.41 L1612.1,1059.72 L1613.5,1051.43 L1614.8,1043.61 L1616.1,1036.33 L1617.5,1029.63 L1618.8,1023.57 L1620.2,1018.21 L1621.5,1013.59 L1622.9,1009.75 L1624.2,1006.73 L1625.6,1004.55 L1627.0,1003.23 L1628.3,1002.79 L1629.6,1003.23 L1631.0,1004.55 L1632.3,1006.73 L1633.7,1009.75 L1635.0,1013.59 L1636.4,1018.21 L1637.8,1023.57 L1639.1,1029.63 L1640.5,1036.33 L1641.8,1043.61 L1643.1,1051.43 L1644.5,1059.72 L1645.8,1068.41 L1647.2,1077.46 L1648.5,1086.79 L1649.9,1096.35 L1651.2,1106.07 L1652.6,1115.92 L1654.0,1125.82 L1655.3,1135.73 L1656.7,1145.62 L1658.0,1155.43 L1659.3,1165.12 L1660.7,1174.67 L1662.0,1184.05 L1663.4,1193.22 L1664.8,1202.17 L1666.1,1210.88 L1667.5,1219.32 L1668.8,1227.50 L1670.2,1235.40 L1671.5,1243.01 L1672.8,1250.32 L1674.2,1257.35 L1675.5,1264.08 L1676.9,1270.52 L1678.2,1276.67 L1679.6,1282.54 L1681.0,1288.13 L1682.3,1293.45 L1683.7,1298.50 L1685.0,1303.29 L1686.3,1307.84 L1687.7,1312.15 L1689.0,1316.22 L1690.4,1320.07 L1691.8,1323.72 L1693.1,1327.15 L1694.5,1330.40 L1695.8,1333.45 L1697.2,1336.33 L1698.5,1339.05 L1699.8,1341.60 L1701.2,1344.00 L1702.5,1346.26 L1703.9,1348.38 L1705.2,1350.37 L1706.6,1352.25 L1708.0,1354.00 L1709.3,1355.65 L1710.7,1357.20 L1712.0,1358.65 L1713.3,1360.01 L1714.7,1361.29 L1716.0,1362.48 L1717.4,1363.60 L1718.8,1364.65 L1720.1,1365.63 L1721.5,1366.55 L1722.8,1367.41 L1724.2,1368.22 L1725.5,1368.98 L1726.8,1369.68 L1728.2,1370.34 L1729.5,1370.96 L1730.9,1371.54 L1732.2,1372.08 L1733.6,1372.58 L1735.0,1373.06 L1736.3,1373.50 L1736.3,1373.5 Z" fill="rgba(244,140,50,0.72)"/>
<path d="M1691.0,1373.5 L1691.0,1373.50 L1692.3,1373.49 L1693.7,1373.47 L1695.0,1373.46 L1696.4,1373.44 L1697.8,1373.42 L1699.1,1373.40 L1700.5,1373.38 L1701.8,1373.36 L1703.2,1373.34 L1704.5,1373.31 L1705.8,1373.29 L1707.2,1373.26 L1708.5,1373.23 L1709.9,1373.20 L1711.2,1373.16 L1712.6,1373.13 L1714.0,1373.09 L1715.3,1373.05 L1716.7,1373.00 L1718.0,1372.96 L1719.3,1372.91 L1720.7,1372.85 L1722.0,1372.79 L1723.4,1372.73 L1724.8,1372.67 L1726.1,1372.60 L1727.5,1372.53 L1728.8,1372.45 L1730.2,1372.37 L1731.5,1372.28 L1732.8,1372.19 L1734.2,1372.09 L1735.5,1371.98 L1736.9,1371.87 L1738.2,1371.75 L1739.6,1371.63 L1741.0,1371.50 L1742.3,1371.36 L1743.7,1371.21 L1745.0,1371.06 L1746.3,1370.90 L1747.7,1370.73 L1749.0,1370.55 L1750.4,1370.36 L1751.8,1370.16 L1753.1,1369.96 L1754.5,1369.74 L1755.8,1369.52 L1757.2,1369.29 L1758.5,1369.05 L1759.8,1368.80 L1761.2,1368.54 L1762.5,1368.28 L1763.9,1368.00 L1765.2,1367.72 L1766.6,1367.44 L1768.0,1367.15 L1769.3,1366.85 L1770.7,1366.55 L1772.0,1366.25 L1773.3,1365.95 L1774.7,1365.65 L1776.0,1365.35 L1777.4,1365.05 L1778.8,1364.76 L1780.1,1364.47 L1781.5,1364.20 L1782.8,1363.93 L1784.2,1363.68 L1785.5,1363.44 L1786.8,1363.22 L1788.2,1363.02 L1789.5,1362.83 L1790.9,1362.67 L1792.2,1362.53 L1793.6,1362.41 L1795.0,1362.32 L1796.3,1362.25 L1797.7,1362.21 L1799.0,1362.20 L1800.3,1362.21 L1801.7,1362.25 L1803.0,1362.32 L1804.4,1362.41 L1805.8,1362.53 L1807.1,1362.67 L1808.5,1362.83 L1809.8,1363.02 L1811.2,1363.22 L1812.5,1363.44 L1813.8,1363.68 L1815.2,1363.93 L1816.5,1364.20 L1817.9,1364.47 L1819.2,1364.76 L1820.6,1365.05 L1822.0,1365.35 L1823.3,1365.65 L1824.7,1365.95 L1826.0,1366.25 L1827.3,1366.55 L1828.7,1366.85 L1830.0,1367.15 L1831.4,1367.44 L1832.8,1367.72 L1834.1,1368.00 L1835.5,1368.28 L1836.8,1368.54 L1838.2,1368.80 L1839.5,1369.05 L1840.8,1369.29 L1842.2,1369.52 L1843.5,1369.74 L1844.9,1369.96 L1846.2,1370.16 L1847.6,1370.36 L1849.0,1370.55 L1850.3,1370.73 L1851.7,1370.90 L1853.0,1371.06 L1854.3,1371.21 L1855.7,1371.36 L1857.0,1371.50 L1858.4,1371.63 L1859.8,1371.75 L1861.1,1371.87 L1862.5,1371.98 L1863.8,1372.09 L1865.2,1372.19 L1866.5,1372.28 L1867.8,1372.37 L1869.2,1372.45 L1870.5,1372.53 L1871.9,1372.60 L1873.2,1372.67 L1874.6,1372.73 L1876.0,1372.79 L1877.3,1372.85 L1878.7,1372.91 L1880.0,1372.96 L1881.3,1373.00 L1882.7,1373.05 L1884.0,1373.09 L1885.4,1373.13 L1886.8,1373.16 L1888.1,1373.20 L1889.5,1373.23 L1890.8,1373.26 L1892.2,1373.29 L1893.5,1373.31 L1894.8,1373.34 L1896.2,1373.36 L1897.5,1373.38 L1898.9,1373.40 L1900.2,1373.42 L1901.6,1373.44 L1903.0,1373.46 L1904.3,1373.47 L1905.7,1373.49 L1907.0,1373.50 L1907.0,1373.5 Z" fill="rgba(244,140,50,0.72)"/>
</svg>
<div class="pl" style="left:91.5px;top:858.5px">76.32%</div>
<div class="pl" style="left:262.3px;top:1199.2px">21.70%</div>
<div class="pl" style="left:433.7px;top:1324.1px">1.66%</div>
<div class="xl" style="left:91.5px;top:1384px">女</div>
<div class="xl" style="left:262.3px;top:1384px">男</div>
<div class="xl" style="left:433.7px;top:1384px">未知</div>
<div class="pl" style="left:745.4px;top:950.7px">61.53%</div>
<div class="pl" style="left:916.5px;top:1112.5px">35.59%</div>
<div class="pl" style="left:1087.7px;top:1320.9px">2.18%</div>
<div class="xl" style="left:745.4px;top:1384px">女</div>
<div class="xl" style="left:916.5px;top:1384px">男</div>
<div class="xl" style="left:1087.7px;top:1384px">未知</div>
<div class="pl" style="left:1396.8px;top:893.7px">53.05%</div>
<div class="pl" style="left:1568.3px;top:963.8px">44.61%</div>
<div class="pl" style="left:1739.0px;top:1323.2px">1.36%</div>
<div class="xl" style="left:1396.8px;top:1384px">女</div>
<div class="xl" style="left:1568.3px;top:1384px">男</div>
<div class="xl" style="left:1739.0px;top:1384px">未知</div>

<!-- watermark -->
<div class="abs" style="left:1637px;top:1354px;font-size:52px;line-height:64px;color:#fff;font-weight:bold;white-space:nowrap;letter-spacing:-0.5px;text-shadow:3px 3px 0 #111,2px 2px 0 #111,1px 1px 0 #111">头条 @<span style="margin-left:3px">贾</span><span style="margin-left:3px">真</span><span style="letter-spacing:3px;margin-left:3px">108</span><span style="margin-left:1px">将</span></div>
<div class="abs" style="left:2076px;top:1301px;width:124px;height:124px;border-radius:50%;background:#6958fa;box-shadow:0 2px 10px rgba(0,0,0,0.15)"></div>
</body></html>
